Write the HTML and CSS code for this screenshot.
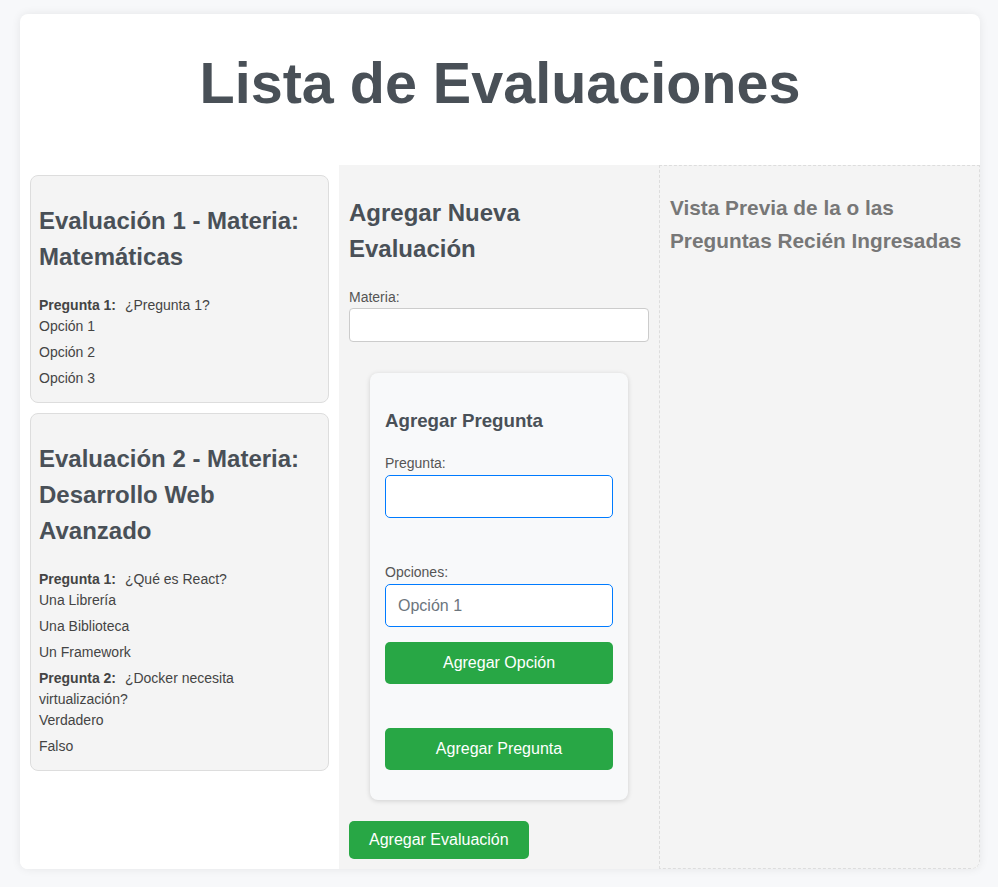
FILE: index.html
```html
<!DOCTYPE html>
<html lang="es">
<head>
<meta charset="utf-8">
<title>Lista de Evaluaciones</title>
<link rel="stylesheet" href="styles.css">
</head>
<body>
<div class="container">
  <h1 class="title">Lista de Evaluaciones</h1>
  <div class="columns">
    <section class="col col-list">
      <div class="eval-card">
        <h2 class="eval-title">Evaluación 1 - Materia: Matemáticas</h2>
        <div class="question">
          <p class="q-text"><strong class="q-label">Pregunta 1:</strong> ¿Pregunta 1?</p>
          <div class="option">Opción 1</div>
          <div class="option">Opción 2</div>
          <div class="option">Opción 3</div>
        </div>
      </div>
      <div class="eval-card">
        <h2 class="eval-title">Evaluación 2 - Materia: Desarrollo Web Avanzado</h2>
        <div class="question">
          <p class="q-text"><strong class="q-label">Pregunta 1:</strong> ¿Qué es React?</p>
          <div class="option">Una Librería</div>
          <div class="option">Una Biblioteca</div>
          <div class="option">Un Framework</div>
        </div>
        <div class="question">
          <p class="q-text"><strong class="q-label">Pregunta 2:</strong> ¿Docker necesita virtualización?</p>
          <div class="option">Verdadero</div>
          <div class="option">Falso</div>
        </div>
      </div>
    </section>
    <section class="col col-form">
      <h2 class="form-title">Agregar Nueva Evaluación</h2>
      <label class="field-label">Materia:</label>
      <input class="materia-input" type="text">
      <div class="question-card">
        <h3 class="qc-title">Agregar Pregunta</h3>
        <label class="field-label">Pregunta:</label>
        <input class="blue-input q-input" type="text">
        <label class="field-label">Opciones:</label>
        <input class="blue-input" type="text" placeholder="Opción 1">
        <button class="btn btn-block btn-option">Agregar Opción</button>
        <button class="btn btn-block btn-question">Agregar Pregunta</button>
      </div>
      <button class="btn btn-eval">Agregar Evaluación</button>
    </section>
    <section class="col col-preview">
      <h3 class="preview-title">Vista Previa de la o las Preguntas Recién Ingresadas</h3>
    </section>
  </div>
</div>
</body>
</html>
```

FILE: styles.css
```css
* {
  box-sizing: border-box;
}

html, body {
  margin: 0;
}

body {
  padding: 14px 18px 18px 20px;
  background: #f7f8fa;
  font-family: "Liberation Sans", Arial, sans-serif;
  font-size: 14px;
  line-height: 1.5;
  color: #444;
}

.container {
  width: 960px;
  background: #fff;
  border-radius: 8px;
  box-shadow: 0 0 10px rgba(0, 0, 0, 0.08);
  overflow: hidden;
}

.title {
  margin: 26px 0 39px;
  font-size: 57.5px;
  line-height: 86px;
  font-weight: bold;
  text-align: center;
  color: #495057;
}

.columns {
  display: grid;
  grid-template-columns: 319px 320px 1fr;
}

.col {
  padding: 10px;
}

.col-list {
  background: #fff;
}

.col-form {
  background: #f4f4f4;
}

.col-preview {
  background: #f4f4f4;
  border: 1px dashed #ddd;
  border-bottom-right-radius: 8px;
}

.eval-card {
  background: #f4f4f4;
  border: 1px solid #ddd;
  border-radius: 8px;
  padding: 8px;
  margin-bottom: 10px;
}

.eval-title {
  margin: 19px 0 20px;
  font-size: 24px;
  line-height: 36px;
  color: #495057;
}

.q-text {
  margin: 0;
  color: #444;
}

.q-label {
  margin-right: 5px;
  color: #444;
}

.option {
  margin-bottom: 5px;
  color: #444;
}

.form-title {
  margin: 20px 0;
  font-size: 24px;
  line-height: 36px;
  color: #495057;
}

.field-label {
  display: block;
  font-size: 14px;
  line-height: 21px;
  color: #555;
}

.materia-input {
  display: block;
  width: 100%;
  height: 34px;
  margin: 0;
  border: 1px solid #ccc;
  border-radius: 4px;
  background: #fff;
  font: 14px "Liberation Sans", Arial, sans-serif;
}

.question-card {
  margin: 31px 21px 21px;
  padding: 15px 15px 30px;
  background: #f8f9fa;
  border-radius: 8px;
  box-shadow: 0 1px 5px rgba(0, 0, 0, 0.15);
}

.qc-title {
  margin: 18.7px 0;
  font-size: 18.72px;
  line-height: 28px;
  color: #495057;
}

.blue-input {
  display: block;
  width: 100%;
  height: 43px;
  padding: 0 12px;
  margin: 1px 0 0;
  border: 1px solid #007bff;
  border-radius: 5px;
  background: #fff;
  font: 16px "Liberation Sans", Arial, sans-serif;
  color: #495057;
}

.blue-input::placeholder {
  color: #6c757d;
}

.q-input {
  margin-bottom: 44px;
}

.btn {
  display: block;
  border: none;
  border-radius: 5px;
  background: #28a745;
  color: #fff;
  font: 16px "Liberation Sans", Arial, sans-serif;
  line-height: 18px;
  text-align: center;
  cursor: pointer;
}

.btn-block {
  width: 100%;
  height: 42px;
  padding: 0 12px;
}

.btn-option {
  margin-top: 15px;
}

.btn-question {
  margin-top: 44px;
}

.btn-eval {
  height: 38px;
  padding: 0 20px;
}

.preview-title {
  margin: 15px 0;
  font-size: 20.8px;
  line-height: 33px;
  color: #777;
}
```
